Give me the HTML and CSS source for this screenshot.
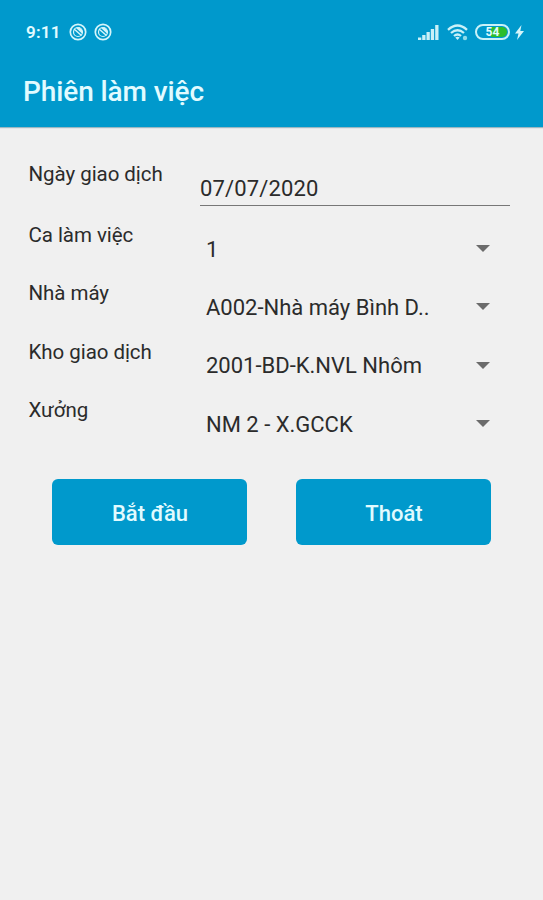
FILE: index.html
```html
<!DOCTYPE html>
<html lang="vi">
<head>
  <meta charset="UTF-8" />
  <meta name="viewport" content="width=device-width, initial-scale=1" />
  <title>Phiên làm việc</title>
  <link rel="stylesheet" href="styles.css">
</head>
<body>

<header class="header">
  <div class="status-bar">
    <span class="time">9:11</span>
    <svg class="notice" width="18" height="18" viewBox="0 0 18 18" fill="none" stroke="#d5f5fa">
      <circle cx="9" cy="9" r="7.700" stroke-width="1.700"/>
      <circle cx="9" cy="9" r="4.500" stroke-width="1.200"/>
      <path d="M5 6l7.500 6.500" stroke-width="1.500"/>
      <path d="M7 5l6 5.500V7L10.500 4.500z" fill="#d5f5fa" stroke="none"/>
    </svg>
    <svg class="notice" width="18" height="18" viewBox="0 0 18 18" fill="none" stroke="#d5f5fa">
      <circle cx="9" cy="9" r="7.700" stroke-width="1.700"/>
      <circle cx="9" cy="9" r="4.500" stroke-width="1.200"/>
      <path d="M5 6l7.500 6.500" stroke-width="1.500"/>
      <path d="M7 5l6 5.500V7L10.500 4.500z" fill="#d5f5fa" stroke="none"/>
    </svg>
    <div class="status-right">
      <svg class="signal" width="21" height="15" viewBox="0 0 21 15" fill="#c9f1f8">
        <path d="M0 12.500h3.300v2.500H0zM4.200 10h3.300v5H4.200zM8.500 7h3.300v8H8.500zM12.800 4h3.300v11h-3.300zM17.200 0h3.300v15h-3.300z"/>
      </svg>
      <svg class="wifi" width="22" height="17" viewBox="0 0 22 17" fill="none" stroke="#c9f1f8" stroke-width="2.300">
        <path d="M1 5.800q9.500-8.500 19 0M4 9q6.500-5.600 13 0M7 12q3.500-3 7 0"/>
        <path d="M8.300 13.500q2.200-1.500 4.400 0l-2.200 2.500z" fill="#c9f1f8" stroke="none"/>
        <circle cx="18" cy="14" r="2.200" fill="#8edceb" stroke="none"/>
      </svg>
      <div class="battery"><span class="level"></span><b>54</b></div>
      <svg class="bolt" width="9" height="15" viewBox="0 0 9 15" fill="#d5f5fa">
        <path d="M6.500 0L0 8.500h3.500L2 15l7-9H5.300z"/>
      </svg>
    </div>
  </div>
  <h1 class="title">Phiên làm việc</h1>
</header>

<main class="form">
  <div class="row row-date">
    <label>Ngày giao dịch</label>
    <div class="date">07/07/2020</div>
  </div>
  <div class="row">
    <label>Ca làm việc</label>
    <div class="select"><span>1</span><i class="arrow"></i></div>
  </div>
  <div class="row">
    <label>Nhà máy</label>
    <div class="select"><span>A002-Nhà máy Bình D..</span><i class="arrow"></i></div>
  </div>
  <div class="row">
    <label>Kho giao dịch</label>
    <div class="select"><span>2001-BD-K.NVL Nhôm</span><i class="arrow"></i></div>
  </div>
  <div class="row">
    <label>Xưởng</label>
    <div class="select"><span>NM 2 - X.GCCK</span><i class="arrow"></i></div>
  </div>

  <div class="buttons">
    <button class="btn">Bắt đầu</button>
    <button class="btn">Thoát</button>
  </div>
</main>

</body>
</html>
```

FILE: styles.css
```css
body {
  font-family: Roboto, sans-serif;
  margin: 0;
  background: #f0f0f0;
  color: #2b2b2b;
}
.header {
  height: 127px;
  background: #0099cc;
  color: #e2fbff;
  box-shadow: 0 1px 1px rgba(0,80,110,0.35);
}
.status-bar {
  display: flex;
  align-items: center;
  height: 64px;
  padding: 0 19px 0 26px;
}
.time {
  font-size: 17px;
  font-weight: 600;
  letter-spacing: 0.2px;
  width: 42.500px;
}
.notice {
  margin-right: 7px;
}
.status-right {
  display: flex;
  align-items: center;
  margin-left: auto;
}
.wifi {
  margin-left: 8px;
}
.battery {
  position: relative;
  box-sizing: border-box;
  width: 35px;
  height: 16px;
  margin: 0 5px 0 6px;
  border: 2px solid #c9f1f8;
  border-radius: 8px;
  text-align: center;
  font-size: 12px;
  line-height: 12px;
}
.battery b {
  position: relative;
}
.level {
  position: absolute;
  top: 1px;
  right: 1px;
  width: 16px;
  height: 10px;
  border-radius: 0 5px 5px 0;
  background: #2cbd2c;
}
.title {
  margin: 0;
  padding-left: 23px;
  font-size: 28px;
  font-weight: 500;
  letter-spacing: -0.1px;
  line-height: 55px;
}
.form {
  padding: 34px 33px 0 28px;
}
.row {
  display: grid;
  grid-template-columns: 172px 1fr;
  height: 58.400px;
}
.row-date {
  height: 61px;
}
label {
  padding-left: 0.5px;
  font-size: 20.500px;
  letter-spacing: -0.05px;
  line-height: 26px;
}
.date {
  height: 29px;
  padding-top: 15px;
  border-bottom: 1px solid #777;
  font-size: 22px;
  letter-spacing: 0.15px;
  line-height: 26px;
}
.select {
  display: flex;
  align-items: center;
  justify-content: space-between;
  height: 26px;
  padding: 14px 20px 0 6px;
  font-size: 22px;
}
.arrow {
  margin-bottom: 1px;
  border: 7px solid transparent;
  border-top-color: #6b6b6b;
  border-bottom: none;
}
.buttons {
  display: flex;
  gap: 49px;
  padding: 23px 0 0 24px;
}
.btn {
  width: 195px;
  height: 66px;
  padding: 4px 0 0 1px;
  border: none;
  border-radius: 6px;
  background: #0099cc;
  color: #e2fbff;
  font-family: inherit;
  font-size: 22px;
  font-weight: 500;
}
```
